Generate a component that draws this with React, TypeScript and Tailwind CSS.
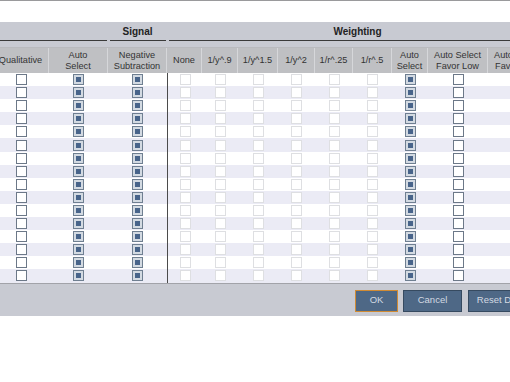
import React from 'react';

type Kind = 'open' | 'checked' | 'disabled';

interface Column {
  label: string[];
  width: string;
  kind: Kind;
  divider?: boolean;
}

const columns: Column[] = [
  { label: ['Qualitative'], width: 'w-[56px]', kind: 'open' },
  { label: ['Auto', 'Select'], width: 'w-[59px]', kind: 'checked' },
  { label: ['Negative', 'Subtraction'], width: 'w-[59px]', kind: 'checked' },
  { label: ['None'], width: 'w-[35px]', kind: 'disabled', divider: true },
  { label: ['1/y^.9'], width: 'w-[36px]', kind: 'disabled' },
  { label: ['1/y^1.5'], width: 'w-[40px]', kind: 'disabled' },
  { label: ['1/y^2'], width: 'w-[37px]', kind: 'disabled' },
  { label: ['1/r^.25'], width: 'w-[38px]', kind: 'disabled' },
  { label: ['1/r^.5'], width: 'w-[39px]', kind: 'disabled' },
  { label: ['Auto', 'Select'], width: 'w-[36px]', kind: 'checked' },
  { label: ['Auto Select', 'Favor Low'], width: 'w-[60px]', kind: 'open' },
  { label: ['Auto Select', 'Favor High'], width: 'w-[60px]', kind: 'open' },
];

const groups = [
  { title: '', width: 'w-[115px]', line: 'ml-[7px] mr-[1px]' },
  { title: 'Signal', width: 'w-[59px]', line: 'ml-[2px] mr-[1px]' },
  { title: 'Weighting', width: 'w-[381px]', line: 'ml-[2px] mr-[1px]' },
];

const rows = Array.from({ length: 16 }, (_, i) => i);

function Box({ kind }: { kind: Kind }) {
  if (kind === 'checked') {
    return (
      <div className="flex h-[11px] w-[11px] items-center justify-center border border-[#6f7f91] bg-[#d3dae2]">
        <div className="h-[5px] w-[5px] bg-[#48648a]" />
      </div>
    );
  }
  if (kind === 'disabled') {
    return <div className="h-[11px] w-[11px] border border-[#dedfe2] bg-white" />;
  }
  return <div className="h-[11px] w-[11px] border border-[#6c7888] bg-white" />;
}

export default function App() {
  return (
    <div
      className="h-[382px] w-[510px] overflow-hidden bg-white text-[#333]"
      style={{ fontFamily: '"Liberation Sans", Arial, sans-serif' }}
    >
      <div className="h-[1px] bg-[#9a9a9c]" />
      <div className="mt-[21px] ml-[-7px] w-[568px]">
        {/* group headings */}
        <div className="flex h-[25px] bg-[#c8cad2]">
          {groups.map((g, i) => (
            <div key={i} className={`${g.width} flex flex-col`}>
              <div className="flex h-[18px] items-center justify-center text-[10px] font-bold text-[#222]">
                {g.title}
              </div>
              <div className={`${g.line} h-[1px] bg-[#3a3a3a]`} />
            </div>
          ))}
        </div>

        {/* column headings */}
        <div className="flex h-[26px] border-t border-[#b9babe] bg-[#bfc0c3]">
          {columns.map((c, i) => (
            <div
              key={i}
              className={`${c.width} flex flex-col items-center justify-center border-r border-[#d6d7da] text-center text-[9.2px] leading-[11px] whitespace-nowrap`}
            >
              {c.label.map((l, j) => (
                <span key={j}>{l}</span>
              ))}
            </div>
          ))}
        </div>

        {/* rows */}
        <div>
          {rows.map(r => (
            <div key={r} className={`flex h-[13.1px] ${r % 2 === 0 ? 'bg-white' : 'bg-[#ebebf5]'}`}>
              {columns.map((c, i) => (
                <div
                  key={i}
                  className={`${c.width} flex items-center justify-center ${c.divider ? 'border-l border-[#4b4b4b]' : ''}`}
                >
                  <Box kind={c.kind} />
                </div>
              ))}
            </div>
          ))}
        </div>

        {/* footer */}
        <div className="flex h-[33px] items-start justify-end gap-[5px] border-t border-[#a2a3a9] bg-[#c8cad2] pt-[6px] pr-[13px] text-[9.5px] text-[#d3dae3]">
          <button className="h-[22px] w-[43px] border border-[#d08b34] bg-[#4e6886]">OK</button>
          <button className="h-[22px] w-[59px] border border-[#364a60] bg-[#4e6886]">Cancel</button>
          <button className="ml-[1px] h-[22px] w-[80px] border border-[#364a60] bg-[#4e6886]">Reset Defaults</button>
        </div>
      </div>
    </div>
  );
}
